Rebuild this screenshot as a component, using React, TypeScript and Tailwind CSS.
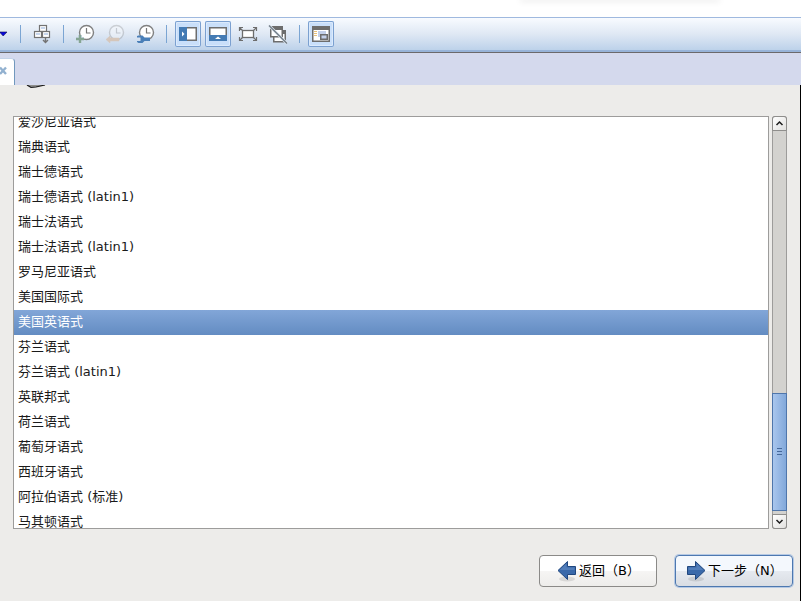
import { useState, type ReactNode } from "react";

const LAYOUTS = [
  "爱沙尼亚语式",
  "瑞典语式",
  "瑞士德语式",
  "瑞士德语式 (latin1)",
  "瑞士法语式",
  "瑞士法语式 (latin1)",
  "罗马尼亚语式",
  "美国国际式",
  "美国英语式",
  "芬兰语式",
  "芬兰语式 (latin1)",
  "英联邦式",
  "荷兰语式",
  "葡萄牙语式",
  "西班牙语式",
  "阿拉伯语式 (标准)",
  "马其顿语式",
];

function Icon({ children }: { children: ReactNode }) {
  return (
    <svg width="26" height="26" viewBox="0 0 26 26" fill="none" className="block" aria-hidden="true">
      {children}
    </svg>
  );
}

function Clock() {
  return (
    <>
      <circle cx="14.5" cy="11.5" r="7" fill="#fff" stroke="#808080" strokeWidth="1.4" />
      <path d="M14.5 7v5h4" stroke="#777" strokeWidth="1.2" />
    </>
  );
}

function SendKeysIcon() {
  return (
    <Icon>
      <g fill="#fff" stroke="#737373" strokeWidth="1.2">
        <rect x="10.5" y="4.5" width="7" height="6" />
        <rect x="5.5" y="10.5" width="7" height="6" />
        <rect x="13.5" y="10.5" width="7" height="6" />
      </g>
      <path d="M12 6h4v2h-4zM7 12h4v2H7zM15 12h4v2h-4z" fill="#c6d5ec" />
      <path d="M16.5 16v5.5M14 19l2.5 2.5L19 19" stroke="#737373" strokeWidth="1.4" />
    </Icon>
  );
}

function SnapshotIcon() {
  return (
    <Icon>
      <Clock />
      <path d="M4 18h8M8 14v8" stroke="#cfdcec" strokeWidth="4" />
      <path d="M4 18h8M8 14v8" stroke="#85a593" strokeWidth="2.4" />
    </Icon>
  );
}

function RevertIcon() {
  return (
    <Icon>
      <g opacity="0.3">
        <Clock />
      </g>
      <path d="M4 18.5l4-3.5v2h9v3H8v2z" fill="#d5c6bb" stroke="#d5c6bb" strokeWidth="0.5" />
    </Icon>
  );
}

function ManageIcon() {
  return (
    <Icon>
      <Clock />
      <path d="M5 15l1.500-.5h4l2 2H18V20h-5.500l-2 2h-4L5 21v-1h3.500v-3.500H5z" fill="#4a7fb8" />
    </Icon>
  );
}

function LibraryIcon() {
  return (
    <Icon>
      <rect x="4.75" y="6.75" width="16.5" height="12.5" fill="#fff" stroke="#6d6d6d" strokeWidth="1.5" />
      <path d="M4 6h8v14H4z" fill="#447bb4" />
      <path d="M7 10.5l2.5 2.5L7 15.5z" fill="#fff" />
    </Icon>
  );
}

function ThumbnailIcon() {
  return (
    <Icon>
      <rect x="4.75" y="6.75" width="16.5" height="12.5" fill="#fff" stroke="#6d6d6d" strokeWidth="1.5" />
      <path d="M4 14h18v6H4z" fill="#447bb4" />
      <path d="M10 18l3-2.5 3 2.5z" fill="#fff" />
    </Icon>
  );
}

function FullScreenIcon() {
  return (
    <Icon>
      <rect x="7.5" y="9.5" width="11" height="7" fill="#fff" stroke="#6d6d6d" strokeWidth="1.3" />
      <path
        d="M4.5 10V6.5H8M4.5 6.5l3 3M18 6.5h3.5V10M21.5 6.5l-3 3M4.5 16v3.5H8M4.5 19.5l3-3M18 19.5h3.5V16M21.5 19.5l-3-3"
        stroke="#6d6d6d"
        strokeWidth="1.2"
      />
    </Icon>
  );
}

function UnityIcon() {
  return (
    <Icon>
      <rect x="8.75" y="9.75" width="11.5" height="11" fill="#fff" stroke="#6d6d6d" strokeWidth="1.5" />
      <path d="M17 9h4v4h-4z" fill="#6d6d6d" />
      <rect x="5.75" y="5.75" width="11.5" height="10" fill="#fff" stroke="#6d6d6d" strokeWidth="1.5" />
      <path d="M5 5h13v4H5z" fill="#6d6d6d" />
      <path d="M4 4.5l18 18" stroke="#dfe8f2" strokeWidth="2.6" />
      <path d="M4 4.5l18 18" stroke="#6f7983" strokeWidth="1.2" />
    </Icon>
  );
}

function ConsoleIcon() {
  return (
    <Icon>
      <rect x="4.75" y="5.75" width="16.5" height="14.5" fill="#fff" stroke="#6d6d6d" strokeWidth="1.5" />
      <path d="M4 5h18v4H4z" fill="#6d6d6d" />
      <path d="M6 10.5h3M6 12.5h3M6 14.5h3" stroke="#e8c07a" />
      <path d="M10 10h8v6h-8z" fill="#c3d0ea" />
      <rect x="12.75" y="13.75" width="6.5" height="4.5" fill="#c3d0ea" stroke="#6d6d6d" strokeWidth="1.5" />
    </Icon>
  );
}

function ToolButton({ label, pressed, children }: { label: string; pressed?: boolean; children: ReactNode }) {
  return (
    <button
      type="button"
      aria-label={label}
      aria-pressed={pressed}
      className={`size-[26px] shrink-0 rounded-[2px] ${
        pressed ? "bg-[#c9dffa] shadow-[inset_0_0_0_1px_#7ba0d0,inset_0_0_0_2px_#dbeafc]" : ""
      }`}
    >
      {children}
    </button>
  );
}

function Separator() {
  return <span className="mx-1 h-[18px] w-px shrink-0 bg-[#7ba5d3]" />;
}

function Toolbar() {
  return (
    <div className="border-y border-t-[#9fb9df] border-b-[#6b696b]">
      <div className="flex h-[34px] items-center gap-1 border-b-2 border-[#97b3d8] bg-linear-to-b from-[#f8fbff] via-[#dfe8f4] to-[#bdd2ea]">
        <button type="button" aria-label="Power" className="h-[26px] w-3 shrink-0">
          <svg width="8" height="26" viewBox="0 0 8 26" className="block" aria-hidden="true">
            <path d="M-.5 11h7.5l-3.8 4z" fill="#0808e0" stroke="#101048" strokeWidth="0.6" />
          </svg>
        </button>
        <Separator />
        <ToolButton label="Send Ctrl+Alt+Del">
          <SendKeysIcon />
        </ToolButton>
        <Separator />
        <ToolButton label="Take snapshot">
          <SnapshotIcon />
        </ToolButton>
        <ToolButton label="Revert snapshot">
          <RevertIcon />
        </ToolButton>
        <ToolButton label="Manage snapshots">
          <ManageIcon />
        </ToolButton>
        <Separator />
        <ToolButton label="Library" pressed>
          <LibraryIcon />
        </ToolButton>
        <ToolButton label="Thumbnail bar" pressed>
          <ThumbnailIcon />
        </ToolButton>
        <ToolButton label="Full screen">
          <FullScreenIcon />
        </ToolButton>
        <ToolButton label="Unity">
          <UnityIcon />
        </ToolButton>
        <Separator />
        <ToolButton label="Console view" pressed>
          <ConsoleIcon />
        </ToolButton>
      </div>
    </div>
  );
}

function TabStrip() {
  return (
    <div className="flex h-8 items-end bg-[#d4d9ed]">
      <button
        type="button"
        aria-label="Close tab"
        className="h-[27px] w-[15px] rounded-tr-[4px] border-t border-r border-t-[#c3d3e8] border-r-[#7198bd] bg-white"
      >
        <svg width="8" height="26" viewBox="0 0 8 26" className="block" aria-hidden="true">
          <path d="M0 8.5l6 6.5M6 8.5L0 15" stroke="#92b1d0" strokeWidth="2.4" />
        </svg>
      </button>
    </div>
  );
}

function LayoutList() {
  const [selected, setSelected] = useState("美国英语式");

  return (
    <div
      role="listbox"
      aria-label="键盘"
      className="flex min-w-0 flex-1 flex-col justify-center overflow-hidden border border-[#9d9c9b] bg-white"
    >
      {LAYOUTS.map((name) => (
        <button
          key={name}
          type="button"
          role="option"
          aria-selected={name === selected}
          onClick={() => setSelected(name)}
          className={`h-[25px] shrink-0 px-1 pb-px text-left text-[13px] whitespace-nowrap ${
            name === selected ? "bg-linear-to-b from-[#82a6d8] to-[#638cc2] text-white" : "text-[#1a1a1a]"
          }`}
        >
          {name}
        </button>
      ))}
    </div>
  );
}

function ScrollBar() {
  return (
    <div className="flex w-[15px] shrink-0 flex-col rounded-[3px] bg-[#d3d2cf] shadow-[inset_0_0_0_1px_#9d9c9b]">
      <button
        type="button"
        aria-label="Scroll up"
        className="flex h-[15px] items-center justify-center rounded-t-[3px] border border-[#8f8e8c] bg-linear-to-br from-white to-[#e2e1df]"
      >
        <svg width="9" height="7" viewBox="0 0 9 7" fill="none" aria-hidden="true">
          <path d="M1.5 5l3-3 3 3" stroke="#1c1c1c" strokeWidth="1.5" />
        </svg>
      </button>
      <div className="flex-1" />
      <div className="flex h-[118px] flex-col items-center justify-center gap-[2px] border border-[#4f76ab] bg-linear-to-r from-[#a9c6ed] to-[#82a8da] pb-0.5">
        <span className="h-px w-[5px] bg-[#45689a]" />
        <span className="h-px w-[5px] bg-[#45689a]" />
        <span className="h-px w-[5px] bg-[#45689a]" />
      </div>
      <button
        type="button"
        aria-label="Scroll down"
        className="mt-[3px] flex h-[15px] items-center justify-center rounded-b-[3px] border border-[#8f8e8c] bg-linear-to-br from-white to-[#e2e1df]"
      >
        <svg width="9" height="7" viewBox="0 0 9 7" fill="none" aria-hidden="true">
          <path d="M1.5 2l3 3 3-3" stroke="#1c1c1c" strokeWidth="1.5" />
        </svg>
      </button>
    </div>
  );
}

function ArrowIcon({ back }: { back?: boolean }) {
  return (
    <svg width="20" height="22" viewBox="0 0 20 22" className="shrink-0" aria-hidden="true">
      <ellipse cx="10" cy="19" rx="8" ry="2.5" fill="#000" opacity="0.1" />
      <path
        d={back ? "M1 10.5L10.5 1.5v5h8v8h-8v5z" : "M19 10.5L9.5 1.5v5h-8v8h8v5z"}
        fill="#3a69aa"
        stroke="#20477f"
        strokeLinejoin="round"
      />
      <path
        d={back ? "M2.8 10L9.5 3.5v4h8v2.5z" : "M17.2 10L10.5 3.5v4h-8v2.5z"}
        fill="#5c87c0"
        opacity="0.7"
      />
    </svg>
  );
}

export default function App() {
  return (
    <div className="flex h-screen flex-col overflow-hidden bg-[#edecea] font-['DejaVu_Sans','Noto_Sans_CJK_SC',sans-serif]">
      <div className="h-[17px] shrink-0 bg-white">
        <div className="ml-[65%] h-0 w-[198px] shadow-[0_0_6px_1px_rgba(0,0,0,0.15)]" />
      </div>
      <Toolbar />
      <TabStrip />
      <main className="flex min-h-0 flex-1 flex-col border-r border-black">
        <svg width="60" height="31" viewBox="0 0 60 31" className="shrink-0" aria-hidden="true">
          <path d="M27 0l4 2.5 5-.5 9-2z" fill="#8d8d8b" />
          <path d="M27 0l4 2.5 5-.5 9-2" fill="none" stroke="#1b1b1b" strokeWidth="1.2" />
        </svg>
        <div className="flex h-[413px] gap-[3px] px-[13px]">
          <LayoutList />
          <ScrollBar />
        </div>
        <div className="flex justify-end gap-[18px] pt-[26px] pr-[7px] text-[13px] text-black">
          <button
            type="button"
            className="flex h-8 w-[118px] items-center rounded-[4px] border border-[#8b8a88] bg-linear-to-b from-white from-50% via-[#f6f5f4] via-50% to-[#eeedeb] pl-[17px] whitespace-nowrap"
          >
            <ArrowIcon back />
            <span className="ml-0.5">返回（B）</span>
          </button>
          <button
            type="button"
            className="flex h-8 w-[118px] items-center rounded-[4px] border border-[#4d78b0] bg-linear-to-b from-[#f4f8fd] from-50% via-[#e6eaf0] via-50% to-[#d9dde3] pl-[10px] whitespace-nowrap shadow-[0_0_0_1px_#b5c9e4]"
          >
            <ArrowIcon />
            <span className="ml-0.5">下一步（N）</span>
          </button>
        </div>
      </main>
    </div>
  );
}
